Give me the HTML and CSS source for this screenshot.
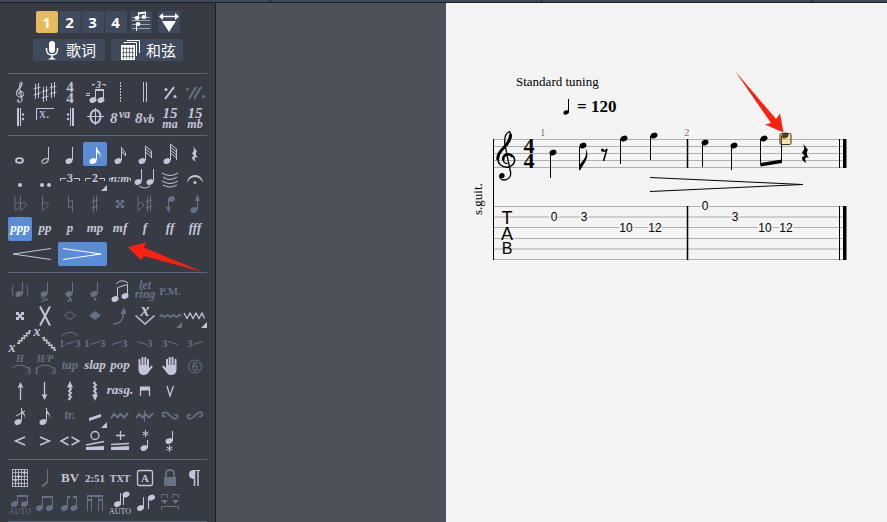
FILE: index.html
```html
<!DOCTYPE html>
<html lang="zh-CN">
<head>
  <meta charset="UTF-8">
  <meta name="viewport" content="width=device-width, initial-scale=1.0">
  <title>Score Editor</title>
  <link rel="stylesheet" href="styles.css">
</head>
<body>
  <!-- Shared music shapes -->
  <svg class="defs" width="0" height="0" aria-hidden="true">
    <defs>
      <ellipse id="head" rx="3.6" ry="2.7" transform="rotate(-25)"/>
      <path id="sharp" d="M-1.5 -7V8M1.5 -8V7M-3.5 -2L3.5 -4M-3.5 4L3.5 2"/>
      <path id="flat" d="M-3 -8V6.500C0 4.500 3 2.500 2.500 0C2 -2.500 -1 -2 -3 0.500"/>
      <path id="flag" d="M0 0C1 4 5 5 4 11C4 7 2 6 0 5Z"/>
      <path id="more" d="M24 18V24H18Z"/>
      <path id="quarter-rest" d="M-2 -10L3 -3.500C1 -1 1.500 1 4 4.500C0 3 -1 5.500 1.500 9.500C-4.500 7 -4 2 0 3L-3 -1C-0.500 -3.500 0 -6 -2 -10Z"/>
      <g id="clef" fill="none" stroke="currentColor" stroke-linecap="round">
        <path stroke-width="1.300" d="M14.500 42L9 15C8 8 10 3 13.500 1.500C16 5 15 10 11 15"/>
        <path stroke-width="3" d="M14.500 5C14.500 11 11 14 7.500 18C3 22.500 1.500 25 1.800 29"/>
        <path stroke-width="1.500" d="M1.800 29C2 34 6 37.200 11 37.200C16 37 19.200 33 18.500 29.500C18 25.500 14 23.500 11 24.500"/>
        <path stroke-width="2.600" d="M16 26C12 22.500 7 25 7.200 29.500"/>
        <path stroke-width="1.300" d="M7.200 29.500C7.500 32 9 33.500 11 33.500M14.500 42C15.500 47 12 50 8 50C5 50 3.500 48 4 45.500"/>
        <circle cx="6" cy="45.500" r="2.600" fill="currentColor" stroke="none"/>
      </g>
      <path id="squiggle" d="M0 0L2.500 0.500L2 -2.500L5 -2L4.500 -5L7.500 -4.500L7 -7.500L10 -7L9.500 -10L12.500 -9.500L12 -12L14 -12"/>
      <path id="hand" d="M5.500 5.500Q6.500 4 7.500 5.500V11H8.500V3.500Q9.500 2 10.500 3.500V11H11.300V3.500Q12.300 2 13.300 3.500V11H14V5.500Q15 4 16 5.500V14L18.500 11.500Q20.500 11.500 19.500 13L15.500 18.500Q14 21 11 21Q6 21 5.500 16Z"/>
    </defs>
  </svg>

  <header class="tabs">
    <span class="tab"></span>
    <span class="tab"></span>
    <span class="tab"></span>
    <span class="tab"></span>
  </header>

  <div class="editor">
    <aside class="sidebar">
      <div class="voices">
        <div class="voice-group">
          <button type="button" class="voice current">1</button>
          <button type="button" class="voice">2</button>
          <button type="button" class="voice">3</button>
          <button type="button" class="voice">4</button>
        </div>
        <button type="button" class="voice" aria-label="Multivoice">
          <svg width="22" height="22" viewBox="0 0 22 22">
            <path opacity="0.500" d="M2 6.500H20M2 9.500H20M2 13.500H20M2 17.500H20"/>
            <path d="M8.500 7V2M15.500 5V1M6.500 12V20"/>
            <path stroke-width="2" d="M8 2.500L16 1.500"/>
            <g class="f"><ellipse cx="7" cy="7" rx="2.500" ry="2"/><ellipse cx="14" cy="6" rx="2.500" ry="2"/><ellipse cx="8" cy="13" rx="2.500" ry="2"/></g>
          </svg>
        </button>
        <button type="button" class="voice" aria-label="Stretch">
          <svg width="22" height="22" viewBox="0 0 22 22">
            <path stroke-width="1.500" d="M3 5.500H19"/>
            <path class="f" d="M1 5.500L5 2V9ZM21 5.500L17 2V9ZM4 10H18L11 21Z"/>
          </svg>
        </button>
      </div>
      <div class="panels">
        <button type="button" class="panel">
          <svg width="16" height="20" viewBox="0 0 16 20">
            <rect class="f" x="5" y="1" width="6" height="12" rx="3"/>
            <path stroke-width="1.500" d="M2.500 8V10Q3 15 8 15Q13 15 13.500 10V8M8 15V18"/>
            <path class="f" d="M4 19.500Q8 15.500 12 19.500Z"/>
          </svg>
          歌词
        </button>
        <button type="button" class="panel">
          <svg width="20" height="20" viewBox="0 0 20 20">
            <path d="M4 3.500V2.500H16.500V16M7 1V0.500H19.500V13"/>
            <rect class="f" x="1" y="5" width="14" height="15"/>
            <path stroke="#3f4b5d" opacity="0.700" d="M3.500 7V19M6.500 7V19M9.500 7V19M12.500 7V19M2 8.500H14M2 12.500H14M2 16.500H14"/>
          </svg>
          和弦
        </button>
      </div>

      <!-- Bars -->
      <section class="tools">
        <button type="button" aria-label="Clef"><svg viewBox="0 0 24 24"><svg x="7" y="1" width="10" height="22" viewBox="0 0 20 51"><use href="#clef"/><path stroke-width="2" d="M14.500 42L9 15C8 8 10 3 13.500 1.500M1.800 29C2 34 6 37.200 11 37.200C16 37 19.200 33 18.500 29.500M14.500 42C15.500 47 12 50 8 50"/></svg></svg></button>
        <button type="button" aria-label="Key signature"><svg viewBox="0 0 24 24"><use href="#sharp" x="4" y="11"/><use href="#sharp" x="12" y="14"/><use href="#sharp" x="20" y="10"/></svg></button>
        <button type="button" aria-label="Time signature"><svg viewBox="0 0 24 24"><text class="t15 b mid" x="12" y="12">4</text><text class="t15 b mid" x="12" y="23">4</text></svg></button>
        <button type="button" aria-label="Triplet feel"><svg viewBox="0 0 24 24"><path d="M3 13.500H7M3 15.500H7M9.500 6V4.500H12M19 4.500H22.500V6M12.500 20V9.500H20.500V20"/><path stroke-width="2" d="M12.500 10H20.500"/><text class="t10 bi mid" x="15.500" y="8">3</text><use class="f" href="#head" x="10" y="20"/><use class="f" href="#head" x="18" y="20"/></svg></button>
        <button type="button" aria-label="Free time"><svg viewBox="0 0 24 24"><path stroke-dasharray="2 1" d="M12.500 2V22"/></svg></button>
        <button type="button" aria-label="Double bar"><svg viewBox="0 0 24 24"><path d="M10.500 2V22M13.500 2V22"/></svg></button>
        <button type="button" aria-label="Simile mark"><svg viewBox="0 0 24 24"><path stroke-width="2" d="M7 19L16 7"/><circle class="f" cx="8" cy="9.500" r="1.500"/><circle class="f" cx="17" cy="16.500" r="1.500"/></svg></button>
        <button type="button" class="dim" aria-label="Double simile mark"><svg viewBox="0 0 24 24"><path stroke-width="2" d="M6 19L13 7M11 19L18 7"/><circle class="f" cx="4.500" cy="9" r="1.500"/><circle class="f" cx="20.500" cy="16.500" r="1.500"/></svg></button>

        <button type="button" aria-label="Repeat open"><svg viewBox="0 0 24 24"><path stroke-width="2" d="M10 3V21"/><path d="M12.500 3V21"/><circle class="f" cx="15" cy="9.500" r="1.200"/><circle class="f" cx="15" cy="14" r="1.200"/></svg></button>
        <button type="button" aria-label="Alternate ending"><svg viewBox="0 0 24 24"><path d="M3.500 15V3.500H21"/><text class="t14" x="6" y="13">x.</text></svg></button>
        <button type="button" aria-label="Repeat close"><svg viewBox="0 0 24 24"><path stroke-width="2" d="M15 3V21"/><path d="M12.500 3V21"/><circle class="f" cx="10" cy="9.500" r="1.200"/><circle class="f" cx="10" cy="14" r="1.200"/></svg></button>
        <button type="button" aria-label="Coda"><svg viewBox="0 0 24 24"><ellipse cx="12.500" cy="11.500" rx="5" ry="6.500" stroke-width="2"/><path d="M12.500 3V20M4 11.500H21"/></svg></button>
        <button type="button" aria-label="8va"><svg viewBox="0 0 24 24"><text class="t15 bi" x="2" y="18">8</text><text class="t12 bi" x="11" y="13">va</text></svg></button>
        <button type="button" aria-label="8vb"><svg viewBox="0 0 24 24"><text class="t15 bi" x="2" y="18">8</text><text class="t12 bi" x="10" y="18">vb</text></svg></button>
        <button type="button" aria-label="15ma"><svg viewBox="0 0 24 24"><text class="t15 bi mid" x="12" y="13">15</text><text class="t12 bi mid" x="12" y="23">ma</text></svg></button>
        <button type="button" aria-label="15mb"><svg viewBox="0 0 24 24"><text class="t15 bi mid" x="12" y="13">15</text><text class="t12 bi mid" x="12" y="23">mb</text></svg></button>
      </section>

      <!-- Notes and dynamics -->
      <section class="tools">
        <button type="button" aria-label="Whole note"><svg viewBox="0 0 24 24"><ellipse cx="11.500" cy="18.500" rx="3.500" ry="2.300" stroke-width="1.800"/></svg></button>
        <button type="button" aria-label="Half note"><svg viewBox="0 0 24 24"><ellipse cx="12" cy="19" rx="3.300" ry="2" transform="rotate(-25 12 19)"/><path d="M15.500 5V18"/></svg></button>
        <button type="button" aria-label="Quarter note"><svg viewBox="0 0 24 24"><use class="f" href="#head" x="11" y="19"/><path d="M14.500 5V18"/></svg></button>
        <button type="button" class="active" aria-label="Eighth note"><svg viewBox="0 0 24 24"><use class="f" href="#head" x="10" y="19"/><path d="M13.500 5V18"/><use class="f" href="#flag" x="13.500" y="5"/></svg></button>
        <button type="button" aria-label="Sixteenth note"><svg viewBox="0 0 24 24"><use class="f" href="#head" x="10" y="19"/><path d="M13.500 5V18M13.500 6L17.500 11V14M13.500 9L17.500 14"/></svg></button>
        <button type="button" aria-label="Thirty-second note"><svg viewBox="0 0 24 24"><use class="f" href="#head" x="9" y="19"/><path d="M12.500 4V18M12.500 4L18.500 9V16M12.500 7L18.500 12M12.500 10L18.500 15"/></svg></button>
        <button type="button" aria-label="Sixty-fourth note"><svg viewBox="0 0 24 24"><use class="f" href="#head" x="9" y="19"/><path d="M12.500 2V18M12.500 2L18.500 7V18M12.500 5L18.500 10M12.500 8L18.500 13M12.500 11L18.500 16"/></svg></button>
        <button type="button" aria-label="Rest"><svg viewBox="0 0 24 24"><g transform="translate(11.500 12) scale(0.800)"><use class="f" href="#quarter-rest"/></g></svg></button>

        <button type="button" aria-label="Dotted"><svg viewBox="0 0 24 24"><circle class="f" cx="12" cy="18" r="2"/></svg></button>
        <button type="button" aria-label="Double dotted"><svg viewBox="0 0 24 24"><circle class="f" cx="9" cy="18" r="2"/><circle class="f" cx="16" cy="18" r="2"/></svg></button>
        <button type="button" aria-label="Triplet"><svg viewBox="0 0 24 24"><path d="M2.500 14V11.500H8M16 11.500H21.500V14"/><text class="t12 b mid" x="12" y="15">3</text></svg></button>
        <button type="button" aria-label="Tuplet"><svg viewBox="0 0 24 24"><path d="M2.500 14V11.500H8M16 11.500H21.500V14"/><text class="t12 b mid" x="12" y="15">2</text><use class="f" href="#more"/></svg></button>
        <button type="button" aria-label="Custom tuplet"><svg viewBox="0 0 24 24"><path d="M1.500 14V11.500H4M21 11.500H22.500V14"/><text class="t11 bi mid" x="12" y="15">n:m</text></svg></button>
        <button type="button" aria-label="Tie"><svg viewBox="0 0 24 24"><use class="f" href="#head" x="5" y="15"/><use class="f" href="#head" x="17" y="15"/><path d="M8.500 2V14M20.500 2V14M6 19Q12 23 17 19"/></svg></button>
        <button type="button" aria-label="Tie beat"><svg viewBox="0 0 24 24"><path d="M4 6Q12 11 20 6M5 10Q12 15 19 10M4 14Q12 19 20 14M5 18Q12 22 19 18"/></svg></button>
        <button type="button" aria-label="Fermata"><svg viewBox="0 0 24 24"><path class="f" d="M4 16Q5 8 12 8Q19 8 20 16Q17.500 10 12 10Q6.500 10 4 16Z"/><circle class="f" cx="12" cy="15.500" r="1.500"/></svg></button>

        <button type="button" class="dim" aria-label="Double flat"><svg viewBox="0 0 24 24"><use href="#flat" x="10" y="12"/><use href="#flat" x="15.500" y="12"/></svg></button>
        <button type="button" class="dim" aria-label="Flat"><svg viewBox="0 0 24 24"><use href="#flat" x="12.500" y="12"/></svg></button>
        <button type="button" class="dim" aria-label="Natural"><svg viewBox="0 0 24 24"><path d="M10.500 4V15.500L14.500 14.500M14.500 20V8.500L10.500 9.500"/></svg></button>
        <button type="button" class="dim" aria-label="Sharp"><svg viewBox="0 0 24 24"><use href="#sharp" x="12" y="12"/></svg></button>
        <button type="button" class="dim" aria-label="Double sharp"><svg viewBox="0 0 24 24"><path stroke-width="1.500" d="M9 9L15 15M15 9L9 15"/><path class="f" d="M8 8H11V11H8ZM13 8H16V11H13ZM8 13H11V16H8ZM13 13H16V16H13Z"/></svg></button>
        <button type="button" class="dim" aria-label="Enharmonic"><svg viewBox="0 0 24 24"><use href="#flat" x="8" y="12"/><use href="#sharp" x="16" y="12"/></svg></button>
        <button type="button" class="dim" aria-label="Semitone down"><svg viewBox="0 0 24 24"><use class="f" href="#head" x="13.500" y="7"/><path d="M10.500 8V17"/><path class="f" d="M8 15H13L10.500 21Z"/></svg></button>
        <button type="button" class="dim" aria-label="Semitone up"><svg viewBox="0 0 24 24"><use class="f" href="#head" x="11" y="18"/><path d="M14.500 7V17"/><path class="f" d="M12 9H17L14.500 2Z"/></svg></button>

        <button type="button" class="word active">ppp</button>
        <button type="button" class="word">pp</button>
        <button type="button" class="word">p</button>
        <button type="button" class="word">mp</button>
        <button type="button" class="word">mf</button>
        <button type="button" class="word">f</button>
        <button type="button" class="word">ff</button>
        <button type="button" class="word">fff</button>

        <button type="button" class="wide" aria-label="Crescendo"><svg viewBox="0 0 49 24"><path d="M43 6.500L5 12L43 17.500"/></svg></button>
        <button type="button" class="wide active" aria-label="Decrescendo"><svg viewBox="0 0 49 24"><path d="M5 6.500L43 12L5 17.500"/></svg></button>
      </section>

      <!-- Effects -->
      <section class="tools">
        <button type="button" class="dim" aria-label="Ghost note"><svg viewBox="0 0 24 24"><use class="f" href="#head" x="11" y="15"/><path d="M14.500 3V14M6 6Q2 12 6 18M18 6Q22 12 18 18"/></svg></button>
        <button type="button" class="dim" aria-label="Accent"><svg viewBox="0 0 24 24"><use class="f" href="#head" x="11" y="15"/><path d="M14.500 3V14M8 18.500L15 20.500L8 22.500"/></svg></button>
        <button type="button" class="dim" aria-label="Heavy accent"><svg viewBox="0 0 24 24"><use class="f" href="#head" x="11" y="15"/><path d="M14.500 3V14"/><path stroke-width="1.500" d="M10 23L12 19L14 23"/></svg></button>
        <button type="button" class="dim" aria-label="Staccato"><svg viewBox="0 0 24 24"><use class="f" href="#head" x="11" y="15"/><path d="M14.500 3V14"/><circle class="f" cx="12" cy="20" r="1.500"/></svg></button>
        <button type="button" aria-label="Legato"><svg viewBox="0 0 24 24"><use class="f" href="#head" x="7" y="20"/><use class="f" href="#head" x="17" y="17"/><path d="M9.500 19V8.500L19.500 5.500V16M8 5Q13 -1 20 4"/></svg></button>
        <button type="button" class="dim" aria-label="Let ring"><svg viewBox="0 0 24 24"><text class="t12 bi mid" x="12" y="10">let</text><text class="t12 bi mid" x="12" y="19">ring</text></svg></button>
        <button type="button" class="dim text">P.M.</button>
        <span></span>

        <button type="button" aria-label="Dead note"><svg viewBox="0 0 24 24"><path stroke-width="2" d="M9 9L15 15M15 9L9 15"/><path class="f" d="M8 8H11V11H8ZM13 8H16V11H13ZM8 13H11V16H8ZM13 13H16V16H13Z"/></svg></button>
        <button type="button" aria-label="Dead slap"><svg viewBox="0 0 24 24"><path stroke-width="2" d="M7 2.500L17 21.500M17 2.500L7 21.500"/></svg></button>
        <button type="button" class="dim" aria-label="Natural harmonic"><svg viewBox="0 0 24 24"><path d="M6.500 11.500L12 7.500L17.500 11.500L12 15.500Z"/></svg></button>
        <button type="button" class="dim" aria-label="Artificial harmonic"><svg viewBox="0 0 24 24"><path class="f" d="M6 11.500L12 7L18 11.500L12 16Z"/></svg></button>
        <button type="button" class="dim" aria-label="Bend"><svg viewBox="0 0 24 24"><path stroke-width="1.300" d="M5 20Q15 20 15.500 9"/><path class="f" d="M12.500 10L16 3L18.500 10Z"/></svg></button>
        <button type="button" aria-label="Whammy bar"><svg viewBox="0 0 24 24"><path stroke-width="1.500" d="M2.500 11.500L12 20L21.500 11.500"/><text class="t18 bi mid" x="12" y="12">x</text></svg></button>
        <button type="button" class="dim" aria-label="Vibrato"><svg viewBox="0 0 24 24"><path stroke-width="2" d="M2 13q1.500 -3 3 -1t3 0t3 0t3 0t3 0t3 0t3 0"/><use class="f" href="#more"/></svg></button>
        <button type="button" aria-label="Wide vibrato"><svg viewBox="0 0 24 24"><path stroke-width="1.300" d="M1 9L4 14.500L7 9L10 14.500L13 9L16 14.500L19 9L21.500 14.500"/><use class="f" href="#more"/></svg></button>

        <button type="button" aria-label="Slide in below"><svg viewBox="0 0 24 24"><text class="t14 bi mid" x="4" y="23">x</text><use href="#squiggle" x="9" y="14" stroke-width="1.300"/></svg></button>
        <button type="button" aria-label="Slide in above"><svg viewBox="0 0 24 24"><text class="t14 bi mid" x="4" y="7">x</text><g transform="translate(9 9) scale(1 -1)"><use href="#squiggle" stroke-width="1.300"/></g></svg></button>
        <button type="button" class="dim" aria-label="Legato slide"><svg viewBox="0 0 24 24"><path d="M7 15.500L17 12.500M4 6.500Q12 0 20 6.500"/><text class="t11 b" x="1" y="18">1</text><text class="t11 b" x="17" y="18">3</text></svg></button>
        <button type="button" class="dim" aria-label="Shift slide"><svg viewBox="0 0 24 24"><path d="M7 15.500L17 12.500"/><text class="t11 b" x="1" y="18">1</text><text class="t11 b" x="17" y="18">3</text></svg></button>
        <button type="button" class="dim" aria-label="Slide in from below"><svg viewBox="0 0 24 24"><path d="M4 15.500L14 12.500"/><text class="t11 b" x="14" y="18">3</text></svg></button>
        <button type="button" class="dim" aria-label="Slide in from above"><svg viewBox="0 0 24 24"><path d="M4 12.500L14 15.500"/><text class="t11 b" x="14" y="18">3</text></svg></button>
        <button type="button" class="dim" aria-label="Slide out downwards"><svg viewBox="0 0 24 24"><path d="M10 12.500L20 15.500"/><text class="t11 b" x="4" y="18">3</text></svg></button>
        <button type="button" class="dim" aria-label="Slide out upwards"><svg viewBox="0 0 24 24"><path d="M10 15.500L20 12.500"/><text class="t11 b" x="4" y="18">3</text></svg></button>

        <button type="button" class="dim" aria-label="Hammer-on"><svg viewBox="0 0 24 24"><path d="M4 14Q12 8 20 14"/><text class="t10 bi mid" x="12" y="8">H</text><text class="t10 b" x="18" y="20">3</text></svg></button>
        <button type="button" class="dim" aria-label="Hammer-on pull-off"><svg viewBox="0 0 24 24"><path d="M4 14Q12 8 20 14"/><text class="t10 bi mid" x="12" y="8">H/P</text><text class="t10 b" x="1" y="20">1</text><text class="t10 b" x="18" y="20">3</text></svg></button>
        <button type="button" class="word dim">tap</button>
        <button type="button" class="word">slap</button>
        <button type="button" class="word">pop</button>
        <button type="button" aria-label="Left hand fingering"><svg viewBox="0 0 24 24"><use class="f" href="#hand"/></svg></button>
        <button type="button" aria-label="Right hand fingering"><svg viewBox="0 0 24 24"><g transform="translate(24 0) scale(-1 1)"><use class="f" href="#hand"/></g></svg></button>
        <button type="button" class="dim" aria-label="String number"><svg viewBox="0 0 24 24"><circle cx="12" cy="12.500" r="6.500"/><text class="t12 sans mid" x="12" y="17">6</text></svg></button>

        <button type="button" aria-label="Arpeggio up"><svg viewBox="0 0 24 24"><path stroke-width="1.300" d="M12.500 8V21"/><path class="f" d="M12.500 3L9.500 9L12.500 8L15.500 9Z"/></svg></button>
        <button type="button" aria-label="Arpeggio down"><svg viewBox="0 0 24 24"><path stroke-width="1.300" d="M11.500 3V16"/><path class="f" d="M11.500 21L8.500 15L11.500 16L14.500 15Z"/></svg></button>
        <button type="button" aria-label="Brush up"><svg viewBox="0 0 24 24"><path stroke-width="1.800" d="M12 8L13 10L11 12L13 14L11 16L13 18L11 20L12 21"/><path class="f" d="M12 2L9 8.500H15Z"/></svg></button>
        <button type="button" aria-label="Brush down"><svg viewBox="0 0 24 24"><path stroke-width="1.800" d="M12 3L11 4L13 6L11 8L13 10L11 12L13 14L12 16"/><path class="f" d="M12 22L9 15.500H15Z"/></svg></button>
        <button type="button" class="word">rasg.</button>
        <button type="button" aria-label="Down stroke"><svg viewBox="0 0 24 24"><path stroke-width="1.200" d="M7.500 17V8M16.500 17V8"/><path class="f" d="M7 7.500H17V11.500H7Z"/></svg></button>
        <button type="button" aria-label="Up stroke"><svg viewBox="0 0 24 24"><path stroke-width="1.300" d="M9 7L12 17L15.500 7"/></svg></button>
        <span></span>

        <button type="button" aria-label="Grace note before beat"><svg viewBox="0 0 24 24"><use class="f" href="#head" x="10" y="18"/><path d="M13.500 4V17M8 12L17 7"/><use class="f" href="#flag" x="13" y="4"/></svg></button>
        <button type="button" aria-label="Grace note on beat"><svg viewBox="0 0 24 24"><use class="f" href="#head" x="10" y="18"/><path d="M13.500 4V17"/><use class="f" href="#flag" x="13" y="4"/></svg></button>
        <button type="button" class="word dim">tr.</button>
        <button type="button" aria-label="Tremolo picking"><svg viewBox="0 0 24 24"><path class="f" d="M6 14L18 10V13L6 17Z"/><use class="f" href="#more"/></svg></button>
        <button type="button" class="dim" aria-label="Mordent"><svg viewBox="0 0 24 24"><path stroke-width="2" d="M3 14L6 10L9.500 13.500L12.500 10L16 13.500L20 9"/></svg></button>
        <button type="button" class="dim" aria-label="Lower mordent"><svg viewBox="0 0 24 24"><path stroke-width="2" d="M3 14L6 10L9.500 13.500L12.500 10L16 13.500L20 9"/><path d="M11.500 6V18"/></svg></button>
        <button type="button" class="dim" aria-label="Turn"><svg viewBox="0 0 24 24"><path stroke-width="1.800" d="M8 12C6 13 4 12 4.500 10C5.500 7.500 9 7.500 12 11.500C15 15.500 18.500 15.500 19.500 13C20 11 18 10 16 11"/></svg></button>
        <button type="button" class="dim" aria-label="Inverted turn"><svg viewBox="0 0 24 24"><path stroke-width="1.800" d="M16 12C18 13 20 12 19.500 10C18.500 7.500 15 7.500 12 11.500C9 15.500 5.500 15.500 4.500 13C4 11 6 10 8 11"/></svg></button>

        <button type="button" aria-label="Fade in"><svg viewBox="0 0 24 24"><path stroke-width="1.500" d="M17 8L7.500 12L17 16"/></svg></button>
        <button type="button" aria-label="Fade out"><svg viewBox="0 0 24 24"><path stroke-width="1.500" d="M7 8L16.500 12L7 16"/></svg></button>
        <button type="button" aria-label="Volume swell"><svg viewBox="0 0 24 24"><path stroke-width="1.500" d="M10.500 8L3 12L10.500 16M13.500 8L21 12L13.500 16"/></svg></button>
        <button type="button" aria-label="Wah open"><svg viewBox="0 0 24 24"><circle cx="12" cy="6.500" r="4" stroke-width="1.300"/><path stroke-width="1.300" d="M3 16L21 12.500"/><path class="f" d="M3 18L21 17V21H3Z"/></svg></button>
        <button type="button" aria-label="Wah closed"><svg viewBox="0 0 24 24"><path stroke-width="1.300" d="M12.500 2V11M8 6.500H17M3 15.500L21 14.500"/><path class="f" d="M3 18L21 17V21H3Z"/></svg></button>
        <button type="button" aria-label="Golpe thumb"><svg viewBox="0 0 24 24"><path d="M12.500 1V8M9.500 3L15.500 6M15.500 3L9.500 6M14.500 11V19"/><use class="f" href="#head" x="11" y="19"/></svg></button>
        <button type="button" aria-label="Golpe finger"><svg viewBox="0 0 24 24"><path d="M11.500 16V23M8.500 18L14.500 21M14.500 18L8.500 21M14.500 2V12"/><use class="f" href="#head" x="11" y="12"/></svg></button>
      </section>

      <!-- Text and beaming -->
      <section class="tools">
        <button type="button" aria-label="Chord diagram"><svg viewBox="0 0 24 24"><path opacity="0.800" d="M4.500 3V21M7.500 3V21M10.500 3V21M13.500 3V21M16.500 3V21M19.500 3V21M4 3.500H20M4 6.500H20M4 10.500H20M4 13.500H20M4 17.500H20M4 20.500H20"/><g class="f"><circle cx="16.500" cy="6.500" r="1.500"/><circle cx="10.500" cy="10.500" r="1.500"/><circle cx="7.500" cy="14" r="1.500"/></g></svg></button>
        <button type="button" class="dim" aria-label="Slash rhythm"><svg viewBox="0 0 24 24"><path d="M14.500 3V16"/><path stroke-width="1.800" d="M14.500 16L9 20.500"/></svg></button>
        <button type="button" class="label">BV</button>
        <button type="button" class="label small">2:51</button>
        <button type="button" class="label tiny">TXT</button>
        <button type="button" aria-label="Section"><svg viewBox="0 0 24 24"><rect x="4.500" y="4.500" width="15" height="15" rx="2" stroke-width="1.300"/><text class="t11 b mid" x="12" y="16">A</text></svg></button>
        <button type="button" class="dim" aria-label="Lock"><svg viewBox="0 0 24 24"><rect class="f" x="6" y="11" width="12" height="9"/><path stroke-width="1.800" d="M8 11V8Q8 4 12 4Q16 4 16 8V11"/></svg></button>
        <button type="button" aria-label="Line break"><svg viewBox="0 0 24 24"><path class="f" d="M11 4H17V5H11ZM11 4V13Q6 12.500 6 8.500Q6 4 11 4Z"/><path stroke-width="1.500" d="M11.500 4V20M15 4V20"/></svg></button>

        <button type="button" class="dim" aria-label="Auto beaming"><svg viewBox="0 0 24 24"><path d="M9.500 13V4.500H19.500V13"/><path stroke-width="2" d="M9 5H20"/><use class="f" href="#head" x="6.500" y="13"/><use class="f" href="#head" x="16.500" y="13"/><text class="t8 mid" x="12" y="23">AUTO</text></svg></button>
        <button type="button" class="dim" aria-label="Force beam"><svg viewBox="0 0 24 24"><path d="M9.500 17V5.500H19.500V17"/><path stroke-width="2" d="M9 6H20"/><use class="f" href="#head" x="6.500" y="17"/><use class="f" href="#head" x="16.500" y="17"/></svg></button>
        <button type="button" class="dim" aria-label="Break beam"><svg viewBox="0 0 24 24"><path d="M9.500 17V6M18.500 17V6"/><path stroke-width="2" d="M9 6H12M15 6H19"/><use class="f" href="#head" x="6.500" y="17"/><use class="f" href="#head" x="16" y="17"/></svg></button>
        <button type="button" class="dim" aria-label="Break secondary beam"><svg viewBox="0 0 24 24"><path d="M4.500 5V20M8.500 5V20M15.500 5V20M19.500 5V20"/><path stroke-width="2" d="M4 5H20M4 9H9M15 9H20"/></svg></button>
        <button type="button" aria-label="Auto stem direction"><svg viewBox="0 0 24 24"><path d="M12.500 2V13M15.500 4V14"/><use class="f" href="#head" x="9.500" y="13"/><use class="f" href="#head" x="18" y="3.500"/><text class="t8 mid" x="12" y="23">AUTO</text></svg></button>
        <button type="button" aria-label="Stem direction"><svg viewBox="0 0 24 24"><path d="M10.500 6V17M15.500 7V18"/><use class="f" href="#head" x="7.500" y="17"/><use class="f" href="#head" x="18.500" y="6.500"/></svg></button>
        <button type="button" class="dim" aria-label="Beam grouping"><svg viewBox="0 0 24 24"><path d="M3.500 7V3.500H9.500V7M14.500 7V3.500H20.500V7M3.500 19V15.500H20.500V19"/><path class="f" d="M3 9H10L6.500 13ZM14 9H21L17.500 13Z"/></svg></button>
      </section>
      <hr class="end">
    </aside>

    <div class="desk"></div>

    <main class="sheet">
      <svg class="score" width="441" height="220" viewBox="446 60 441 220" role="img" aria-label="Score">
        <text class="t13" x="516" y="86">Standard tuning</text>
        <path class="ink thin" d="M568.500 99V112"/>
        <ellipse cx="566" cy="112.500" rx="2.800" ry="2" transform="rotate(-20 566 112)"/>
        <text class="t17 b" x="577" y="112">= 120</text>

        <!-- Staff -->
        <path class="line" d="M493 139.500H846M493 146.500H846M493 153.500H846M493 160.500H846M493 167.500H846"/>
        <path class="line" d="M493 206.500H846M493 227.500H846M493 238.500H846M493 259.500H846"/>
        <path class="line soft" d="M493 217H846M493 249H846"/>
        <path class="ink thin" d="M493.500 139V260M839.500 139V168M839.500 206V260"/>
        <path class="ink" d="M687.500 139V168M687.500 206V260"/>
        <path d="M843 139H846.500V168H843ZM843 206H846.500V260H843Z"/>
        <g transform="translate(496 130)"><use href="#clef"/></g>
        <text class="t22 b mid" x="529" y="153">4</text>
        <text class="t22 b mid" x="529" y="168">4</text>
        <text class="t11 bar" x="540" y="136">1</text>
        <text class="t11 bar" x="684" y="136">2</text>

        <!-- Notes -->
        <use href="#head" x="553" y="152.500"/>
        <use href="#head" x="583" y="145.500"/>
        <use href="#head" x="624" y="138.500"/>
        <use href="#head" x="654" y="135.500"/>
        <use href="#head" x="705" y="142.500"/>
        <use href="#head" x="734" y="145.500"/>
        <use href="#head" x="764" y="138.500"/>
        <use href="#head" x="785" y="135.500"/>
        <path class="ink thin" d="M550.500 153V178M579.500 147V170M620.500 139V164M650.500 136V160M702.500 143V167M731.500 146V170M760.500 139V165M781.500 136V162"/>
        <path class="ink thin" d="M650 177.500L803 184.500L650 191.500"/>
        <path class="ink" d="M602 149.500Q604 153 607 149L603.500 161"/>
        <path d="M579.500 171V165C583 160 588 157 585.500 148C590 156 586 161 579.500 171Z"/>
        <circle cx="602.500" cy="150" r="1.600"/>
        <path d="M760.500 163L782 159.500V163L760.500 166.500Z"/>
        <use href="#quarter-rest" x="805" y="153.500"/>

        <!-- Tablature -->
        <text class="t13" transform="translate(482 215) rotate(-90)">s.guit.</text>
        <g class="sans mid">
          <text class="t18" x="507" y="224">T</text>
          <text class="t18" x="507" y="240">A</text>
          <text class="t16" x="507" y="254">B</text>
        </g>
        <g class="fret">
          <text x="554" y="221">0</text><text x="584" y="221">3</text>
          <text x="626" y="232">10</text><text x="655" y="232">12</text>
          <text x="705" y="210">0</text><text x="735" y="221">3</text>
          <text x="765" y="232">10</text><text x="786" y="232">12</text>
        </g>

        <rect class="cursor" x="780" y="133.500" width="11" height="11" rx="1.500"/>
        <path class="red" d="M735 71L776 119L780 113.500L783.500 132.500L765 124.500L771 123Z"/>
      </svg>
    </main>

    <svg class="pointer" width="76" height="32" viewBox="0 0 76 32" aria-hidden="true">
      <path class="red" d="M0 5L18 0.500L16 5.500L75 30L16 14L13 18Z"/>
    </svg>
  </div>
</body>
</html>
```
FILE: styles.css
```css
* {
  box-sizing: border-box;
}
body {
  margin: 0;
  min-height: 100vh;
  display: flex;
  flex-direction: column;
  background-color: #373b43;
  font-family: "Liberation Serif", "Noto Sans CJK SC", serif;
}
button {
  margin: 0;
  padding: 0;
  border: 0;
  background: none;
  cursor: pointer;
}
.defs {
  position: absolute;
}

/* Tab strip above the editor */
.tabs {
  display: flex;
  height: 3px;
  overflow: hidden;
  background-color: #3f4b5d;
  border-bottom: 1px solid #1b1d21;
}
.tab {
  flex: none;
  width: 271px;
  border-right: 1px solid #1b1d21;
}

.editor {
  position: relative;
  flex: 1;
  display: flex;
}
.sidebar {
  flex: none;
  width: 216px;
  padding: 8px 8px 0;
  border-right: 1px solid #1b1d21;
  background-color: #373b43;
}
.desk {
  flex: none;
  width: 230px;
  background-color: #4e5159;
}
.sheet {
  flex: 1;
  padding-top: 57px;
  background-color: #f4f4f4;
}

/* Voice and panel buttons */
.voices {
  display: flex;
  justify-content: center;
  gap: 6px;
}
.voice-group {
  display: flex;
  gap: 1px;
  margin-right: -3px;
}
.voice {
  width: 22px;
  height: 22px;
  border-radius: 2px;
  background-color: #3f4b5d;
  color: #fff;
  font: bold 15px "Open Sans", sans-serif;
}
.voice svg {
  display: block;
}
.voice.current {
  background-color: #e6bb5c;
}
.panels {
  display: flex;
  justify-content: center;
  gap: 6px;
  margin: 6px 0 12px;
}
.panel {
  display: flex;
  align-items: center;
  justify-content: center;
  gap: 6px;
  width: 72px;
  height: 22px;
  padding-left: 3px;
  border-radius: 2px;
  background-color: #3f4b5d;
  color: #fff;
  font: 15px/20px "Noto Sans CJK SC", sans-serif;
}

/* Tool palette */
.tools {
  display: grid;
  grid-template-columns: repeat(8, 24px);
  grid-auto-rows: 24px;
  gap: 1px;
  padding: 6px 0;
  border-top: 1px solid #57677d;
}
.tools button {
  display: flex;
  align-items: center;
  justify-content: center;
  border-radius: 2px;
  color: #c4c5da;
  white-space: nowrap;
}
.tools button > svg {
  flex: none;
  width: 24px;
  height: 24px;
  overflow: visible;
}
.tools .wide {
  grid-column: span 2;
}
.tools .wide > svg {
  width: 49px;
}
.tools .dim {
  color: #657186;
}
.tools .active {
  background-color: #5b8cd8;
  color: #fff;
}
.tools .word {
  padding-bottom: 2px;
  font: italic bold 13px "Liberation Serif", serif;
}
.tools .text {
  font: bold 11px "Liberation Serif", serif;
}
.tools .label {
  font: bold 13px "Liberation Serif", serif;
}
.tools .label.small {
  font-size: 11px;
}
.tools .label.tiny {
  font-size: 10px;
}
.end {
  margin: 0;
  border: 0;
  border-top: 1px solid #57677d;
}

/* Icon drawing */
.sidebar svg {
  fill: none;
  stroke: currentColor;
}
.sidebar .f,
.sidebar text {
  fill: currentColor;
  stroke: none;
}
text {
  font-family: "Liberation Serif", serif;
}
.mid {
  text-anchor: middle;
}
.b {
  font-weight: bold;
}
.bi {
  font-weight: bold;
  font-style: italic;
}
.sans,
.sans text {
  font-family: "Liberation Sans", sans-serif;
}
.t8 { font-size: 8px; }
.t10 { font-size: 10px; }
.t11 { font-size: 11px; }
.t12 { font-size: 12px; }
.t13 { font-size: 13px; }
.t14 { font-size: 14px; }
.t15 { font-size: 15px; }
.t16 { font-size: 16px; }
.t17 { font-size: 17px; }
.t18 { font-size: 18px; }
.t22 { font-size: 22px; }

/* Score */
.score {
  display: block;
}
.line {
  stroke: #b0b0b0;
}
.line.soft {
  stroke: #cfcfcf;
  stroke-width: 2;
}
.ink {
  fill: none;
  stroke: #000;
  stroke-width: 1.5;
}
.ink.thin {
  stroke-width: 1;
}
.bar {
  fill: #8a7676;
}
.fret text {
  font: 12px "Liberation Sans", sans-serif;
  text-anchor: middle;
  stroke: #f4f4f4;
  stroke-width: 3;
  paint-order: stroke;
}
.cursor {
  fill: #ffc83c59;
  stroke: #3a2f1c;
}
.red {
  fill: #ff2010;
}
/* Arrow pointing at the dynamics row */
.pointer {
  position: absolute;
  top: 239px;
  left: 128px;
}
```
